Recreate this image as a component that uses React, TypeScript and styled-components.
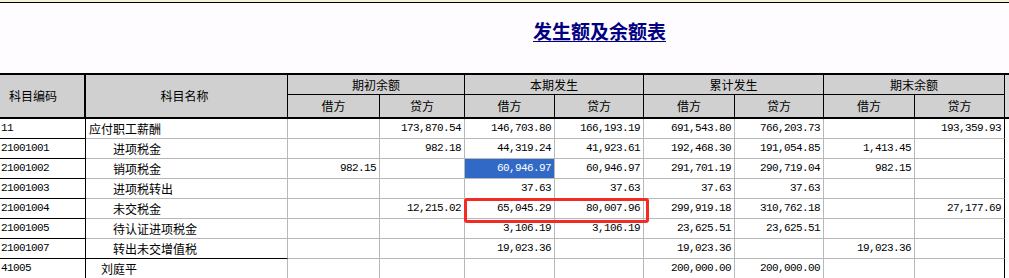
import styled, { createGlobalStyle } from 'styled-components';

const GlobalStyle = createGlobalStyle`
    html, body {
        margin: 0;
        padding: 0;
        overflow: hidden;
        background: #fffcff;
    }
`

const Page = styled.div`
    width: 1009px;
    font-family: "Noto Sans CJK SC", "DejaVu Sans", sans-serif;
    color: #000;
`

const TopRule = styled.div`
    height: 2px;
    background: #f6f0d4;
    border-bottom: 1px solid #000;
`

const TitleBar = styled.div`
    height: 70px;
    box-sizing: border-box;
    padding: 17px 0 0 533px;
`

const Title = styled.h1`
    margin: 0;
    font-size: 19px;
    line-height: 22px;
    font-weight: bold;
    color: #000080;
    text-decoration: underline;
    text-underline-offset: 2px;
`

const Sheet = styled.div`
    position: relative;
    display: grid;
    grid-template-columns: 86px 202px 92px 85px 90px 89px 91px 89px 91px 90px 4px;
    grid-template-rows: 20px 24px;
    grid-auto-rows: 20px;
    border-top: 2px solid #000;
    background: #fff;
`

const HeadCell = styled.div<{ $rows?: number; $cols?: number; $thickRight?: boolean; $bottom: number; $shift?: number }>`
    grid-row: span ${p => p.$rows ?? 1};
    grid-column: span ${p => p.$cols ?? 1};
    box-sizing: border-box;
    background: #d0d0d0;
    border-right: ${p => (p.$thickRight ? 2 : 1)}px solid #000;
    border-bottom: ${p => p.$bottom}px solid #000;
    display: flex;
    align-items: center;
    justify-content: center;
    padding-right: ${p => p.$shift ?? 0}px;
    font-size: 12px;
    line-height: 14px;
`

const HeadFiller = styled.div`
    grid-row: span 2;
    background: #d8d8d8;
    border-bottom: 2px solid #000;
`

const CodeCell = styled.div`
    box-sizing: border-box;
    border-right: 1px solid #000;
    border-bottom: 1px solid #000;
    padding-left: 1px;
    font-family: "Liberation Mono", monospace;
    font-size: 11px;
    letter-spacing: -0.6px;
    line-height: 19px;
    white-space: nowrap;
`

const NameCell = styled.div<{ $level: number; $strong?: boolean }>`
    box-sizing: border-box;
    border-right: 1px solid #b8b8b8;
    border-bottom: 1px solid ${p => (p.$strong ? '#000' : '#b8b8b8')};
    padding-left: ${p => 3 + p.$level * 12}px;
    font-size: 12px;
    line-height: 19px;
    white-space: nowrap;
`

const AmountCell = styled.div<{ $selected?: boolean; $last?: boolean }>`
    box-sizing: border-box;
    border-right: 1px solid ${p => (p.$last ? '#000' : '#b8b8b8')};
    border-bottom: 1px solid #b8b8b8;
    padding-right: 3px;
    text-align: right;
    font-family: "Liberation Mono", monospace;
    font-size: 11px;
    letter-spacing: -0.6px;
    line-height: 19px;
    white-space: nowrap;
    background: ${p => (p.$selected ? '#3169c6' : '#fff')};
    color: ${p => (p.$selected ? '#fff' : '#000')};
`

const RowFiller = styled.div`
    background: #fff;
`

// red annotation frame drawn over the 本期发生 cells of 未交税金
const Marker = styled.div`
    position: absolute;
    left: 464px;
    top: 123px;
    width: 185px;
    height: 25px;
    box-sizing: border-box;
    border: 3px solid #f42a24;
    border-radius: 3px;
    pointer-events: none;
`

type Row = { code: string; name: string; level: number; values: string[]; groupEnd?: boolean }

const rows: Row[] = [
    { code: '11', name: '应付职工薪酬', level: 0, values: ['', '173,870.54', '146,703.80', '166,193.19', '691,543.80', '766,203.73', '', '193,359.93'] },
    { code: '21001001', name: '进项税金', level: 2, values: ['', '982.18', '44,319.24', '41,923.61', '192,468.30', '191,054.85', '1,413.45', ''] },
    { code: '21001002', name: '销项税金', level: 2, values: ['982.15', '', '60,946.97', '60,946.97', '291,701.19', '290,719.04', '982.15', ''] },
    { code: '21001003', name: '进项税转出', level: 2, values: ['', '', '37.63', '37.63', '37.63', '37.63', '', ''] },
    { code: '21001004', name: '未交税金', level: 2, values: ['', '12,215.02', '65,045.29', '80,007.96', '299,919.18', '310,762.18', '', '27,177.69'] },
    { code: '21001005', name: '待认证进项税金', level: 2, values: ['', '', '3,106.19', '3,106.19', '23,625.51', '23,625.51', '', ''] },
    { code: '21001007', name: '转出未交增值税', level: 2, values: ['', '', '19,023.36', '', '19,023.36', '', '19,023.36', ''], groupEnd: true },
    { code: '41005', name: '刘庭平', level: 1, values: ['', '', '', '', '200,000.00', '200,000.00', '', ''] },
]

const groups = ['期初余额', '本期发生', '累计发生', '期末余额']

const App = () => {
    return (
        <>
            <GlobalStyle />
            <Page>
                <TopRule />
                <TitleBar>
                    <Title>发生额及余额表</Title>
                </TitleBar>
                <Sheet>
                    <HeadCell $rows={2} $thickRight $bottom={2} $shift={18}>科目编码</HeadCell>
                    <HeadCell $rows={2} $bottom={2} $shift={4}>科目名称</HeadCell>
                    {groups.map(g => (
                        <HeadCell key={g} $cols={2} $bottom={1}>{g}</HeadCell>
                    ))}
                    <HeadFiller />
                    {groups.map(g => [
                        <HeadCell key={g + 'd'} $bottom={2}>借方</HeadCell>,
                        <HeadCell key={g + 'c'} $bottom={2}>贷方</HeadCell>,
                    ])}
                    {rows.map((r, i) => [
                        <CodeCell key={r.code + 'code'}>{r.code}</CodeCell>,
                        <NameCell key={r.code + 'name'} $level={r.level} $strong={r.groupEnd}>{r.name}</NameCell>,
                        ...r.values.map((v, j) => (
                            <AmountCell key={r.code + j} $selected={i === 2 && j === 2} $last={j === 7}>{v}</AmountCell>
                        )),
                        <RowFiller key={r.code + 'fill'} />,
                    ])}
                    <Marker />
                </Sheet>
            </Page>
        </>
    )
}

export default App;
